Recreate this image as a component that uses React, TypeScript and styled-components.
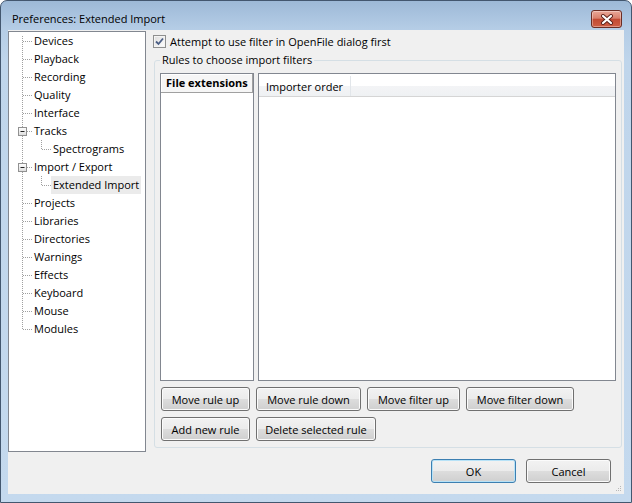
import styled, { createGlobalStyle } from "styled-components";

const sections = [
    { label: "Devices", level: 0 },
    { label: "Playback", level: 0 },
    { label: "Recording", level: 0 },
    { label: "Quality", level: 0 },
    { label: "Interface", level: 0 },
    { label: "Tracks", level: 0, toggle: true },
    { label: "Spectrograms", level: 1, lastChild: true },
    { label: "Import / Export", level: 0, toggle: true },
    { label: "Extended Import", level: 1, lastChild: true, selected: true },
    { label: "Projects", level: 0 },
    { label: "Libraries", level: 0 },
    { label: "Directories", level: 0 },
    { label: "Warnings", level: 0 },
    { label: "Effects", level: 0 },
    { label: "Keyboard", level: 0 },
    { label: "Mouse", level: 0 },
    { label: "Modules", level: 0 },
];

type Section = (typeof sections)[number] & { toggle?: boolean; lastChild?: boolean; selected?: boolean };

const TreeLines = ({ item, first, last }: { item: Section; first: boolean; last: boolean }) => {
    const dots = { stroke: "#a0a0a0", strokeDasharray: "1 1", strokeWidth: 1 };
    if (item.level === 1) {
        return (
            <Lines width={42} height={18}>
                <line x1={13.5} y1={0} x2={13.5} y2={18} {...dots} />
                <line x1={32.5} y1={0} x2={32.5} y2={item.lastChild ? 10 : 18} {...dots} />
                <line x1={33} y1={9.5} x2={42} y2={9.5} {...dots} />
            </Lines>
        );
    }
    return (
        <Lines width={23} height={18}>
            <line x1={13.5} y1={first ? 4 : 0} x2={13.5} y2={last ? 10 : 18} {...dots} />
            <line x1={item.toggle ? 18 : 14} y1={9.5} x2={23} y2={9.5} {...dots} />
            {item.toggle && (
                <>
                    <rect x={9.5} y={5.5} width={8} height={8} fill="url(#tg)" stroke="#919191" />
                    <line x1={11.5} y1={9.5} x2={15.5} y2={9.5} stroke="#222" />
                </>
            )}
        </Lines>
    );
};

// button widths measured off the dialog
const buttonRows = [
    [
        { label: "Move rule up", width: 89 },
        { label: "Move rule down", width: 105 },
        { label: "Move filter up", width: 93 },
        { label: "Move filter down", width: 108 },
    ],
    [
        { label: "Add new rule", width: 89 },
        { label: "Delete selected rule", width: 120 },
    ],
];

export default function App() {
    return (
        <>
            <GlobalStyle />
            <svg width={0} height={0} style={{ position: "absolute" }}>
                <defs>
                    <linearGradient id="tg" x1="0" y1="0" x2="0" y2="1">
                        <stop offset="0" stopColor="#ffffff" />
                        <stop offset="1" stopColor="#dcdcdc" />
                    </linearGradient>
                </defs>
            </svg>
            <Window>
                <TitleBar>
                    <Title>Preferences: Extended Import</Title>
                    <CloseButton>
                        <svg width={14} height={11} viewBox="0 0 14 11">
                            <path d="M3 2 L11 9 M11 2 L3 9" stroke="#5a211a" strokeWidth={4} strokeLinecap="round" />
                            <path d="M3 2 L11 9 M11 2 L3 9" stroke="#ffffff" strokeWidth={2.2} strokeLinecap="round" />
                        </svg>
                    </CloseButton>
                </TitleBar>

                <Client>
                    <Main>
                        <Tree>
                            {sections.map((item, index) => (
                                <TreeRow key={item.label}>
                                    <TreeLines
                                        item={item as Section}
                                        first={index === 0}
                                        last={index === sections.length - 1}
                                    />
                                    <TreeLabel $selected={!!(item as Section).selected}>{item.label}</TreeLabel>
                                </TreeRow>
                            ))}
                        </Tree>

                        <Pane>
                            <CheckRow>
                                <CheckBox>
                                    <svg width={9} height={9} viewBox="0 0 9 9">
                                        <path d="M1 4.5 L3.5 7 L8 1.5" fill="none" stroke="#4c5f86" strokeWidth={1.8} />
                                    </svg>
                                </CheckBox>
                                Attempt to use filter in OpenFile dialog first
                            </CheckRow>

                            <Group>
                                <GroupLabel>Rules to choose import filters</GroupLabel>
                                <Lists>
                                    <ExtList>
                                        <ExtHeader>File extensions</ExtHeader>
                                    </ExtList>
                                    <OrderList>
                                        <OrderHeader>
                                            <Column>Importer order</Column>
                                        </OrderHeader>
                                    </OrderList>
                                </Lists>

                                {buttonRows.map((row, i) => (
                                    <ButtonRow key={i}>
                                        {row.map((b) => (
                                            <Button key={b.label} $width={b.width}>{b.label}</Button>
                                        ))}
                                    </ButtonRow>
                                ))}
                            </Group>
                        </Pane>
                    </Main>

                    <Footer>
                        <Button $default $width={85}>OK</Button>
                        <Button $width={85}>Cancel</Button>
                    </Footer>

                    <Grip width={6} height={6} viewBox="0 0 6 6">
                        <rect x={4} y={0} width={1} height={1} fill="#b8b8b8" />
                        <rect x={2} y={2} width={1} height={1} fill="#b8b8b8" />
                        <rect x={4} y={2} width={1} height={1} fill="#b8b8b8" />
                        <rect x={0} y={4} width={1} height={1} fill="#b8b8b8" />
                        <rect x={2} y={4} width={1} height={1} fill="#b8b8b8" />
                        <rect x={4} y={4} width={1} height={1} fill="#b8b8b8" />
                    </Grip>
                </Client>
            </Window>
        </>
    );
}

const GlobalStyle = createGlobalStyle`
    html, body {
        margin: 0;
        padding: 0;
        background: #ffffff;
    }
    body {
        font-family: "Open Sans", "Noto Sans", sans-serif;
        font-size: 11px;
        color: #000;
    }
`;

const Window = styled.div`
    width: 632px;
    height: 503px;
    box-sizing: border-box;
    border: 1px solid #43576f;
    border-radius: 7px 7px 0 0;
    background: linear-gradient(to bottom, #9db9d7 0, #b5cde6 28px, #bfd5eb 60px, #c4d9ee 100%);
    padding: 0 7px 8px 7px;
    display: flex;
    flex-direction: column;
    overflow: hidden;
`;

const TitleBar = styled.div`
    height: 29px;
    flex-shrink: 0;
    display: flex;
    align-items: center;
    justify-content: space-between;
    padding: 0 2px 0 4px;
`;

const Title = styled.div`
    font-size: 11px;
    margin-top: 6px;
    color: #000;
`;

const CloseButton = styled.div`
    width: 29px;
    height: 16px;
    margin-top: 7px;
    border: 1px solid #6b2d24;
    border-radius: 3px;
    background: linear-gradient(to bottom, #e9a898 0, #d9806c 45%, #c24a33 52%, #cf5e44 100%);
    box-shadow: inset 0 0 0 1px rgba(255, 255, 255, 0.35);
    display: flex;
    align-items: center;
    justify-content: center;
`;

const Client = styled.div`
    flex: 1;
    position: relative;
    background: #f0f0f0;
    display: flex;
    flex-direction: column;
`;

const Main = styled.div`
    display: flex;
    gap: 7px;
    padding-top: 1px;
`;

const Tree = styled.div`
    width: 138px;
    height: 421px;
    box-sizing: border-box;
    border: 1px solid #828790;
    background: #fff;
    display: flex;
    flex-direction: column;
`;

const TreeRow = styled.div`
    height: 18px;
    display: flex;
    align-items: center;
`;

const Lines = styled.svg`
    flex-shrink: 0;
    display: block;
`;

const TreeLabel = styled.span<{ $selected: boolean }>`
    height: 18px;
    line-height: 18px;
    padding: 0 2px;
    white-space: nowrap;
    background: ${(p) => (p.$selected ? "#ebebeb" : "transparent")};
`;

const Pane = styled.div`
    flex: 1;
    display: flex;
    flex-direction: column;
    padding-top: 2px;
`;

const CheckRow = styled.label`
    height: 16px;
    display: flex;
    align-items: center;
    gap: 4px;
    white-space: nowrap;
`;

const CheckBox = styled.span`
    width: 13px;
    height: 13px;
    box-sizing: border-box;
    border: 1px solid #8e8f8f;
    background: linear-gradient(to bottom right, #dcdcdc, #ffffff);
    box-shadow: inset 0 0 0 1px #f4f4f4;
    display: flex;
    align-items: center;
    justify-content: center;
`;

const Group = styled.fieldset`
    margin: 3px 0 0 1px;
    width: 468px;
    box-sizing: border-box;
    border: 1px solid #d5dfe5;
    border-radius: 3px;
    padding: 5px 5px 6px 5px;
    min-width: 0;
`;

const GroupLabel = styled.legend`
    padding: 0 2px;
    line-height: 16px;
`;

const Lists = styled.div`
    display: flex;
    gap: 4px;
    height: 308px;
`;

const ExtList = styled.div`
    width: 94px;
    box-sizing: border-box;
    border: 1px solid #828790;
    background: #fff;
`;

const ExtHeader = styled.div`
    height: 19px;
    box-sizing: border-box;
    border-right: 1px solid #a0a0a0;
    border-bottom: 1px solid #a0a0a0;
    background: #f6f6f6;
    box-shadow: inset 1px 1px 0 #ffffff;
    font-weight: bold;
    padding-left: 5px;
    line-height: 18px;
    white-space: nowrap;
`;

const OrderList = styled.div`
    flex: 1;
    box-sizing: border-box;
    border: 1px solid #828790;
    background: #fff;
`;

const OrderHeader = styled.div`
    margin-top: 2px;
    height: 21px;
    box-sizing: border-box;
    display: flex;
    background: linear-gradient(to bottom, #ffffff 0, #ffffff 50%, #f3f4f6 50%, #eff1f3 100%);
    border-bottom: 1px solid #d5d5d5;
`;

const Column = styled.div`
    width: 92px;
    box-sizing: border-box;
    border-right: 1px solid #e2e6ea;
    padding-left: 7px;
    display: flex;
    align-items: center;
`;

const ButtonRow = styled.div`
    display: flex;
    gap: 6px;
    margin: 6px 0 0 1px;
`;

const Button = styled.button<{ $default?: boolean; $width: number }>`
    width: ${(p) => p.$width}px;
    height: 24px;
    box-sizing: border-box;
    padding: 0;
    font: inherit;
    color: #000;
    border: 1px solid ${(p) => (p.$default ? "#3c7fb1" : "#707070")};
    border-radius: 3px;
    background: linear-gradient(to bottom, #f2f2f2 0, #ebebeb 50%, #dddddd 50%, #cfcfcf 100%);
    box-shadow: inset 0 0 0 1px ${(p) => (p.$default ? "#b7e2f7" : "#fbfbfb")};
    white-space: nowrap;
`;

const Footer = styled.div`
    display: flex;
    justify-content: flex-end;
    gap: 10px;
    padding: 7px 13px 0 0;
`;

const Grip = styled.svg`
    position: absolute;
    right: 2px;
    bottom: 2px;
`;
